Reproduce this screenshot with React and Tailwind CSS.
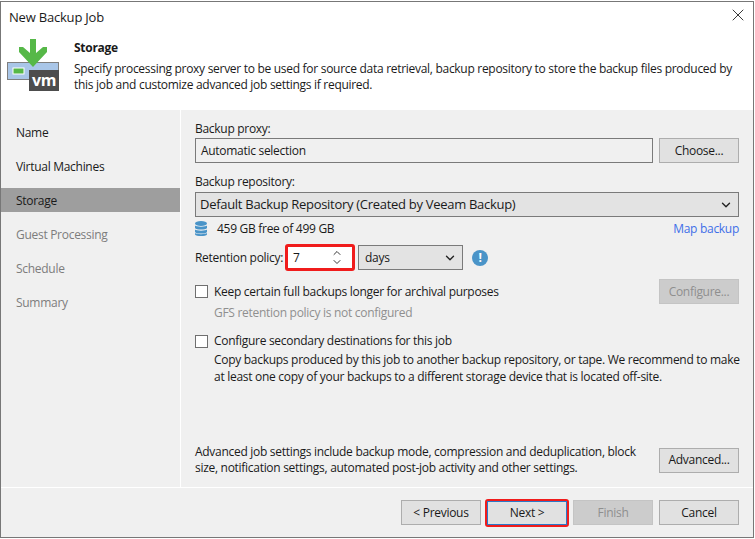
import { ChevronDown, ChevronUp, X } from 'lucide-react'

const steps = [
  { name: 'Name' },
  { name: 'Virtual Machines' },
  { name: 'Storage', active: true },
  { name: 'Guest Processing', disabled: true },
  { name: 'Schedule', disabled: true },
  { name: 'Summary', disabled: true },
]

function Btn({ children, disabled, className = '' }) {
  return (
    <button
      className={`w-20 h-[25px] shrink-0 border leading-none ${
        disabled ? 'bg-[#cccccc] border-[#c4c4c4] text-[#8f8f8f]' : 'bg-[#e1e1e1] border-[#adadad] text-[#1a1a1a]'
      } ${className}`}
    >
      {children}
    </button>
  )
}

function Logo() {
  return (
    <svg width="54" height="54" viewBox="0 0 54 54" className="shrink-0">
      <rect x="0.5" y="23.5" width="51" height="17" fill="#a9c6e8" stroke="#7f7f7f" />
      <rect x="6" y="29" width="11" height="6" fill="#56b848" stroke="#ffffff" />
      <rect x="22" y="31" width="30" height="21" fill="#4d4d4d" />
      <path d="M23 0h6v14l7-6h4v5L26 28 12 13V8h4l7 6z" fill="#56b848" />
      <text x="37" y="47" textAnchor="middle" fontFamily="Open Sans, sans-serif" fontWeight="700" fontSize="16" fill="#ffffff">vm</text>
    </svg>
  )
}

function DbIcon() {
  return (
    <svg width="12" height="16" viewBox="0 0 12 16" className="shrink-0">
      <ellipse cx="6" cy="2.5" rx="6" ry="2.5" fill="#4a94c8" />
      <path d="M0 4.5c1 1.5 11 1.5 12 0V7c-1 2-11 2-12 0zM0 8.5c1 1.5 11 1.5 12 0V11c-1 2-11 2-12 0zM0 12c1 1.5 11 1.5 12 0v1.5c-1 2-11 2-12 0z" fill="#4a94c8" />
    </svg>
  )
}

function Check() {
  return <span className="w-[13px] h-[13px] border border-[#6f6f6f] bg-white shrink-0" />
}

export default function App() {
  return (
    <div className="w-[755px] h-[539px] bg-white pt-px text-xs tracking-[-0.29px] text-[#1a1a1a] font-['Open_Sans',sans-serif]">
      <div className="w-[754px] h-[537px] border border-[#777777] flex flex-col">
        {/* header */}
        <div className="h-[108px] bg-white shrink-0 relative">
          <div className="pl-2 pt-[7px] text-[13px] tracking-[-0.2px] leading-4">New Backup Job</div>
          <X className="absolute right-[5px] top-[3px] text-[#111111]" size={20} strokeWidth={1} />
          <div className="flex pl-[6px] pt-[14px]">
            <Logo />
            <div className="pl-[13px] whitespace-nowrap">
              <div className="font-bold leading-4 pt-px">Storage</div>
              <div className="pt-[5px] leading-4">
                Specify processing proxy server to be used for source data retrieval, backup repository to store the backup files produced by
                <br />
                this job and customize advanced job settings if required.
              </div>
            </div>
          </div>
        </div>

        <div className="flex-1 flex bg-[#f0f0f0] min-h-0">
          {/* steps */}
          <div className="w-[179px] shrink-0 border-r border-white box-content pt-[10px] flex flex-col gap-[10px]">
            {steps.map(s => (
              <div
                key={s.name}
                className={`h-6 pl-[15px] pt-[2px] flex items-center ${s.active ? 'bg-[#9e9e9e]' : ''} ${s.disabled ? 'text-[#7d7d7d]' : ''}`}
              >
                {s.name}
              </div>
            ))}
          </div>

          {/* form */}
          <div className="flex-1 min-w-0 pl-[14px] pr-[14px] flex flex-col whitespace-nowrap">
            <div className="h-[28px] flex items-end pb-px">Backup proxy:</div>
            <div className="flex gap-[6px]">
              <div className="flex-1 h-[25px] border border-[#7a7a7a] bg-[#f0f0f0] pl-[5px] pt-px flex items-center">Automatic selection</div>
              <Btn>Choose...</Btn>
            </div>
            <div className="h-[29px] flex items-end pb-[2px]">Backup repository:</div>
            <div className="h-[25px] border border-[#7a7a7a] bg-[#e3e3e3] pl-1 pr-[5px] flex items-center justify-between">
              <span className="text-[13px] leading-4 pb-px">Default Backup Repository (Created by Veeam Backup)</span>
              <ChevronDown size={14} strokeWidth={2.4} className="text-[#222222]" />
            </div>
            <div className="h-[22px] flex items-center justify-between pt-px">
              <span className="flex items-center gap-[10px]">
                <DbIcon />
                459 GB free of 499 GB
              </span>
              <span className="text-[#3f6fe8]">Map backup</span>
            </div>
            <div className="flex items-center h-[27px] mt-[5px]">
              <span className="w-[90px]">Retention policy:</span>
              <div className="w-[70px] h-[27px] border-[3px] rounded-[3px] border-[#f01c1c] bg-white pl-[5px] pr-[9px] flex items-center justify-between">
                <span>7</span>
                <span className="flex flex-col text-[#222222] -space-y-[3px]">
                  <ChevronUp size={12} strokeWidth={1.8} />
                  <ChevronDown size={12} strokeWidth={1.8} />
                </span>
              </div>
              <div className="ml-[3px] w-[105px] h-[25px] border border-[#7a7a7a] bg-[#e3e3e3] pl-[6px] pr-[5px] flex items-center justify-between">
                <span>days</span>
                <ChevronDown size={14} strokeWidth={2.4} className="text-[#222222]" />
              </div>
              <span className="ml-[9px] w-4 h-4 rounded-full bg-[#4a94c8] text-white font-bold flex items-center justify-center leading-none">!</span>
            </div>
            <div className="flex justify-between mt-[8px] h-[25px]">
              <label className="flex items-center gap-[6px]">
                <Check />
                Keep certain full backups longer for archival purposes
              </label>
              <Btn disabled>Configure...</Btn>
            </div>
            <div className="pl-[19px] h-4 mt-px leading-4 text-[#8f8f8f]">GFS retention policy is not configured</div>
            <label className="flex items-center gap-[6px] mt-[12px] h-4">
              <Check />
              Configure secondary destinations for this job
            </label>
            <div className="pl-[19px] pt-[2px] leading-[17px]">
              Copy backups produced by this job to another backup repository, or tape. We recommend to make
              <br />
              at least one copy of your backups to a different storage device that is located off-site.
            </div>
            <div className="mt-auto mb-[11px] flex items-center justify-between">
              <div className="leading-4">
                Advanced job settings include backup mode, compression and deduplication, block
                <br />
                size, notification settings, automated post-job activity and other settings.
              </div>
              <Btn>Advanced...</Btn>
            </div>
          </div>
        </div>

        {/* footer */}
        <div className="h-[50px] shrink-0 bg-[#f0f0f0] border-t border-white flex items-center justify-end gap-[6px] pr-[14px]">
          <Btn>&lt; Previous</Btn>
          <div className="w-[84px] h-[28px] -mx-[2px] border-[2px] rounded-[3px] border-[#f01c1c] shrink-0">
            <button className="w-full h-full border border-[#2b78c8] bg-[#e1e1e1] leading-none">Next &gt;</button>
          </div>
          <Btn disabled>Finish</Btn>
          <Btn>Cancel</Btn>
        </div>
      </div>
    </div>
  )
}
